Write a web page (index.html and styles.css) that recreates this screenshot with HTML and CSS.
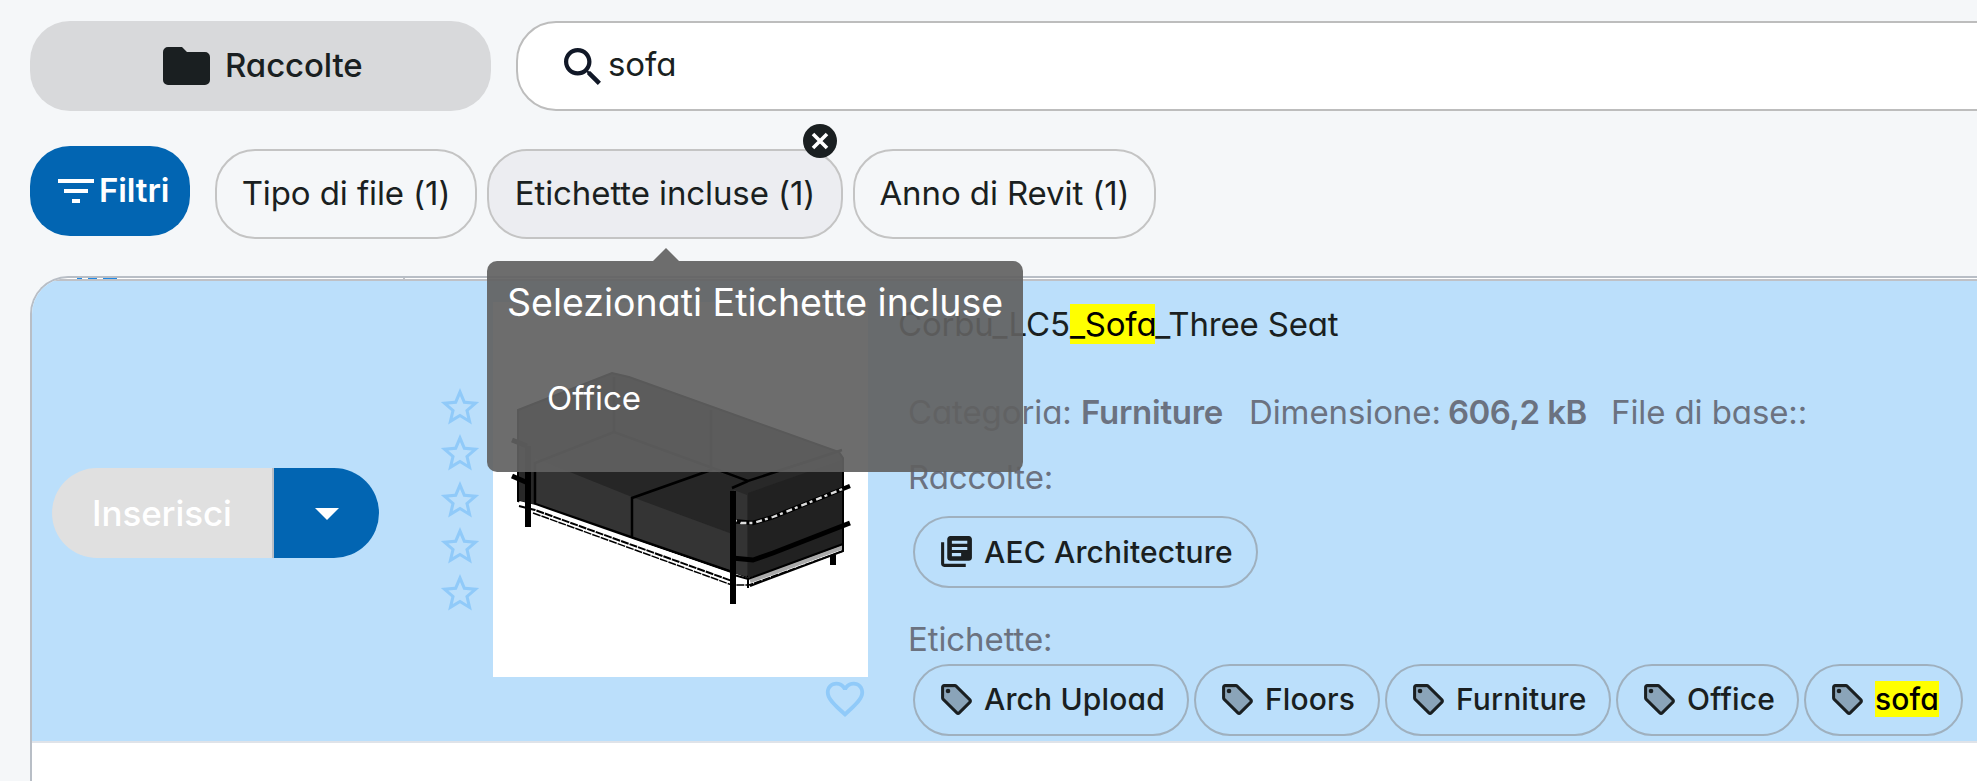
FILE: index.html
```html
<!DOCTYPE html>
<html lang="it">
<head>
<meta charset="utf-8">
<title>Raccolte</title>
<link rel="stylesheet" href="styles.css">
</head>
<body>
<svg class="defs" width="0" height="0" aria-hidden="true">
  <symbol id="star" viewBox="0 0 24 24"><path d="M22 9.24l-7.19-.62L12 2 9.19 8.63 2 9.24l5.46 4.73L5.82 21 12 17.27 18.18 21l-1.63-7.03L22 9.24zM12 15.4l-3.76 2.27 1-4.28-3.32-2.88 4.38-.38L12 6.1l1.71 4.04 4.38.38-3.32 2.88 1 4.28L12 15.4z"/></symbol>
  <symbol id="tag" viewBox="0 0 24 24"><path opacity=".3" d="M11 4H4v7l9 9.01L20 13l-9-9z"/><path d="M21.41 11.58l-9-9C12.05 2.22 11.55 2 11 2H4c-1.1 0-2 .9-2 2v7c0 .55.22 1.05.59 1.42l9 9c.36.36.86.58 1.41.58s1.05-.22 1.41-.59l7-7c.37-.36.59-.86.59-1.41s-.23-1.06-.59-1.42zM13 20.01L4 11V4h7v-.01l9 9-7 7.02z"/><circle cx="6.5" cy="6.5" r="1.5"/></symbol>
</svg>
<header class="top">
  <button class="collections">
    <svg class="folder" viewBox="0 0 47 38"><path d="M5 0h14l5 5h18a5 5 0 0 1 5 5v23a5 5 0 0 1-5 5H5a5 5 0 0 1-5-5V5a5 5 0 0 1 5-5z"/></svg>
    <span>Raccolte</span>
  </button>
  <div class="search">
    <svg class="magnifier" viewBox="3 3 17.5 17.5"><path d="M15.5 14h-.79l-.28-.27C15.41 12.59 16 11.11 16 9.5 16 5.91 13.09 3 9.5 3S3 5.91 3 9.5 5.91 16 9.5 16c1.61 0 3.09-.59 4.23-1.57l.27.28v.79l5 4.99L20.49 19l-4.99-5zm-6 0C7.01 14 5 11.99 5 9.5S7.01 5 9.5 5 14 7.01 14 9.5 11.99 14 9.5 14z"/></svg>
    <span class="query">sofa</span>
  </div>
</header>
<nav class="filters">
  <button class="filter-main">
    <svg class="filter-icon" viewBox="0 0 36 24"><path d="M0 0h36v4H0zM6 10h24v4H6zM14 20h8v4h-8z"/></svg>
    <span>Filtri</span>
  </button>
  <div class="chips">
    <div class="chip chip-type"><span>Tipo di file (1)</span></div>
    <div class="chip chip-tags"><span>Etichette incluse (1)</span>
      <svg class="remove" viewBox="0 0 34 34"><circle cx="17" cy="17" r="17"/><path d="M10 10l14 14M24 10l-14 14"/></svg>
      <div class="tooltip">
        <div class="tip-title">Selezionati Etichette incluse</div>
        <div class="tip-item">Office</div>
      </div>
    </div>
    <div class="chip chip-year"><span>Anno di Revit (1)</span></div>
  </div>
</nav>
<main class="list">
  <div class="clipped-row"><i class="bit b1"></i><i class="bit b2"></i><i class="bit b3"></i><i class="tick"></i></div>
  <article class="row">
    <div class="action">
      <div class="insert">Inserisci</div>
      <div class="more"><i class="caret"></i></div>
    </div>
    <div class="stars">
      <svg><use href="#star"/></svg><svg><use href="#star"/></svg><svg><use href="#star"/></svg><svg><use href="#star"/></svg><svg><use href="#star"/></svg>
    </div>
    <div class="preview">
      <svg class="sofa" viewBox="0 0 375 375">
        <path fill="#282828" stroke="#000" stroke-width="2" d="M25 108L119 71 136 75 346 150 350 156V246L254 275 239 269 25 199z"/>
        <path fill="#2c2c2c" d="M42 161L121 130 255 177 239 186V230z"/>
        <path fill="#262626" d="M60 165L121 134 218 168 139 196zM139 196L218 168 255 180 239 188V231z"/>
        <path fill="#343434" d="M42 156L139 195 239 232V269L42 202z"/>
        <path fill="#212121" d="M255 191L349 158V246L255 276z"/>
        <path fill="#333" d="M241 188L254 193V275L241 271z"/>
        <path fill="none" stroke="#000" stroke-width="2.500" d="M42 203V161L121 130 255 179 349 148M121 75V130M218 108V168L139 196V236M239 186L255 179M42 202L239 270"/>
        <path fill="none" stroke="#fff" stroke-width="4" d="M26 201L42 205 239 274"/>
        <path fill="none" stroke="#fff" stroke-width="3" d="M42 210L239 279"/>
        <path fill="none" stroke="#000" stroke-width="2" stroke-dasharray="8 1" d="M26 204L42 208 239 279"/>
        <path fill="none" stroke="#000" stroke-width="1.500" stroke-dasharray="8 1" d="M40 211L239 283H256L350 249"/>
        <path fill="none" stroke="#aaa" stroke-width="4.500" d="M257 279L350 245"/>
        <path fill="none" stroke="#000" stroke-width="2" d="M241 273L255 277 350 242M255 276v10M257 284L350 249V242"/>
        <path fill="none" stroke="#000" stroke-width="5" d="M19 138l15 6M19 174l16 7M239 256L260 258 280 251 357 221"/>
        <path fill="none" stroke="#000" stroke-width="4.500" d="M239 219L260 221 280 215 357 184"/>
        <path fill="none" stroke="#ddd" stroke-width="2.300" stroke-dasharray="3 4 6 3" d="M241 218L248 221 260 221 280 215 352 186"/>
        <path fill="none" stroke="#000" stroke-width="6" d="M35 144V225M240 189V302M340 253V263"/>
      </svg>
      <svg class="heart" viewBox="0 0 24 24"><path d="M16.500 3c-1.740 0-3.410.81-4.500 2.090C10.910 3.810 9.240 3 7.500 3 4.420 3 2 5.420 2 8.500c0 3.780 3.400 6.860 8.550 11.540L12 21.350l1.450-1.320C18.600 15.360 22 12.280 22 8.500 22 5.420 19.580 3 16.500 3zm-4.400 15.550l-.1.100-.1-.1C7.140 14.240 4 11.390 4 8.500 4 6.500 5.500 5 7.500 5c1.540 0 3.040.99 3.570 2.360h1.870C13.460 5.990 14.960 5 16.500 5c2 0 3.500 1.500 3.500 3.500 0 2.890-3.140 5.740-7.900 10.050z"/></svg>
    </div>
    <div class="details">
      <h2 class="name">Corbu_LC5<mark>_Sofa</mark>_Three Seat</h2>
      <div class="meta">
        <span class="m1">Categoria: <b>Furniture</b></span>
        <span class="m2">Dimensione: <b>606,2 kB</b></span>
        <span class="m3">File di base::</span>
      </div>
      <div class="label label-coll">Raccolte:</div>
      <div class="tags">
        <div class="tag w-aec"><svg viewBox="0 0 24 24"><path d="M4 6H2v14c0 1.100.9 2 2 2h14v-2H4V6z"/><path d="M20 2H8c-1.100 0-2 .9-2 2v12c0 1.100.9 2 2 2h12c1.100 0 2-.9 2-2V4c0-1.100-.9-2-2-2zm-1 9H9V9h10v2zm-4 4H9v-2h6v2zm4-8H9V5h10v2z"/></svg><span>AEC Architecture</span></div>
      </div>
      <div class="label label-tags">Etichette:</div>
      <div class="tags">
        <div class="tag w-arch"><svg><use href="#tag"/></svg><span>Arch Upload</span></div>
        <div class="tag w-floors"><svg><use href="#tag"/></svg><span>Floors</span></div>
        <div class="tag w-furn"><svg><use href="#tag"/></svg><span>Furniture</span></div>
        <div class="tag w-office"><svg><use href="#tag"/></svg><span>Office</span></div>
        <div class="tag w-sofa"><svg><use href="#tag"/></svg><span><mark>sofa</mark></span></div>
      </div>
    </div>
  </article>
</main>
</body>
</html>
```
FILE: styles.css
```css
* { box-sizing: border-box; }
body {
  margin: 0; width: 1977px; height: 781px; overflow: hidden;
  background: #f5f7f9; color: #1a1f21;
  font: 370 33px/40px Inter, "Liberation Sans", sans-serif;
  font-feature-settings: "cv11"; letter-spacing: -.1px; white-space: nowrap;
}
svg { display: block; flex: none; fill: currentColor; }
.defs { position: absolute; }
button { font: inherit; font-feature-settings: inherit; letter-spacing: inherit; color: inherit; border: 0; margin: 0; }
mark { background: #ff0; color: #000; }

.top { display: flex; gap: 25px; padding: 21px 0 0 30px; }
.collections {
  width: 461px; height: 90px; padding: 0 0 0 133px; border-radius: 40px; background: #d8d9db;
  display: flex; align-items: center; gap: 15px; font-weight: 480;
}
.collections span, .filter-main span, .chip > span { padding-bottom: 2px; }
.folder { width: 47px; height: 38px; }
.search {
  flex: 1; height: 90px; margin-right: -60px; padding-left: 46px;
  background: #fff; border: 2px solid #bdbdbd; border-radius: 40px;
  display: flex; align-items: center; gap: 7px;
}
.magnifier { width: 37px; height: 37px; color: #111827; }
.query { padding-bottom: 4px; }

.filters { display: flex; align-items: flex-start; gap: 25px; padding: 35px 0 0 30px; }
.filter-main {
  width: 160px; height: 90px; padding: 0 0 0 28px; border-radius: 40px;
  background: #0265b2; color: #fff; display: flex; align-items: center; gap: 5px; font-weight: 570;
}
.filter-icon { width: 36px; height: 24px; }
.chips { display: flex; gap: 10px; padding-top: 3px; }
.chip {
  position: relative; height: 90px; border: 2px solid #c4c4c4; border-radius: 40px;
  display: flex; align-items: center; justify-content: center;
}
.chip-type { width: 262px; }
.chip-tags { width: 356px; background: #ecedf1; }
.chip-year { width: 303px; }
.remove { position: absolute; left: 314px; top: -27px; width: 34px; height: 34px; }
.remove path { stroke: #fff; stroke-width: 3.6; }
.tooltip {
  position: absolute; z-index: 5; left: -2px; top: 110px; width: 536px; height: 211px;
  padding: 21px 0 0 20px; border-radius: 10px; background: rgba(97,97,97,.92); color: #fff; font-weight: 400;
}
.tooltip::before {
  content: ""; position: absolute; left: 166px; top: -13px;
  border: solid transparent; border-width: 0 13px 13px; border-bottom-color: rgba(97,97,97,.92);
}
.tip-title { font-size: 37.5px; line-height: 42px; letter-spacing: 0; }
.tip-item { padding: 54px 0 0 40px; font-size: 33px; line-height: 40px; }

.list {
  margin: 37px -60px 0 30px; height: 505px; overflow: hidden; background: #fff;
  border: solid #b8bec6; border-width: 2px 0 0 2px; border-radius: 38px 0 0 0;
}
.clipped-row { position: relative; height: 3px; border-bottom: 2px solid #bfc1c6; }
.bit { position: absolute; top: 0; height: 1px; background: #1e88e5; }
.b1 { left: 45px; width: 5px; }
.b2 { left: 56px; width: 9px; }
.b3 { left: 71px; width: 14px; }
.tick { position: absolute; left: 371px; top: 0; width: 2px; height: 1px; background: #bfc1c6; }
.row {
  height: 462px; display: flex; align-items: flex-start;
  background: #bbdffb; border-bottom: 2px solid #dfe3e9;
}
.action { display: flex; width: 327px; height: 90px; margin: 187px 0 0 20px; border-radius: 45px; overflow: hidden; }
.insert {
  width: 222px; padding-left: 40px; background: #e0e0e0; border-right: 2px solid #b8bec6;
  color: #fff; font-size: 35px; font-weight: 500; line-height: 91px;
}
.more { flex: 1; background: #0265b2; display: flex; align-items: center; justify-content: center; }
.caret { border: solid transparent; border-width: 12px 12px 0; border-top-color: #fff; margin-top: 2px; }
.stars { width: 46px; margin: 102.5px 0 0 58px; color: #90caf9; }
.stars svg { width: 46px; height: 46.500px; }
.preview { width: 375px; margin: 21px 0 0 10px; }
.sofa { width: 375px; height: 375px; background: #fff; }
.heart { width: 46px; height: 46px; margin: -1px 0 0 329px; color: #90caf9; }
.details { padding: 23px 0 0 30px; }
.name { margin: 0; font-size: 33px; font-weight: 430; line-height: 40px; letter-spacing: -.18px; }
.meta { display: flex; margin: 48px 0 0 10px; color: #6b7280; }
.meta b { font-weight: 600; letter-spacing: -.25px; }
.m1 { width: 341px; }
.m2 { width: 362px; }
.m2 b { letter-spacing: -.5px; margin-left: -2px; }
.label { margin-left: 10px; color: #6b7280; }
.label-coll { margin-top: 25px; }
.label-tags { margin-top: 31px; }
.tags { display: flex; gap: 5px; margin-left: 15px; }
.label-coll + .tags { margin-top: 19px; }
.label-tags + .tags { margin-top: 5px; }
.label-tags + .tags .tag { padding-bottom: 2px; }
.tag {
  height: 72px; padding: 0 0 1px 23px; border: 2px solid #9fb0be; border-radius: 36px;
  display: flex; align-items: center; gap: 9px; font-size: 30px; font-weight: 450; line-height: 36px; letter-spacing: .15px;
}
.tag svg { width: 37px; height: 37px; }
.w-aec { width: 345px; }
.w-arch { width: 276px; }
.w-floors { width: 186px; }
.w-furn { width: 226px; }
.w-office { width: 183px; }
.w-sofa { width: 159px; }
```
